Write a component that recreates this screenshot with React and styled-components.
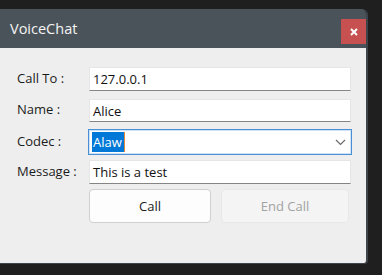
import React from 'react';
import styled, { createGlobalStyle } from 'styled-components';

const Global = createGlobalStyle`
  html, body {
    margin: 0;
    padding: 0;
    background: #1f1f1f;
    font-family: "Open Sans", "Noto Sans", sans-serif;
  }
`;

const Window = styled.div`
  margin-top: 9px;
  width: 366px;
  border-right: 2px solid #3d444a;
  border-bottom: 1px solid #3d444a;
  border-radius: 0 6px 4px 0;
  overflow: hidden;
`;

const TitleBar = styled.div`
  height: 39px;
  background: #4b535a;
  display: flex;
  align-items: center;
  justify-content: space-between;
  padding-left: 10px;
  box-sizing: border-box;
`;

const Title = styled.span`
  color: #f4f4f4;
  font-size: 14.5px;
  margin-top: -1px;
`;

const CloseButton = styled.div`
  width: 25px;
  height: 25px;
  background: #c75050;
  display: flex;
  align-items: center;
  justify-content: center;
  align-self: flex-start;
  margin-top: 10px;
`;

const Body = styled.div`
  height: 215px;
  background: #eeeeee;
  box-sizing: border-box;
  padding: 19px 0 0 17px;
`;

const Row = styled.div`
  display: flex;
  align-items: flex-start;
  margin-top: ${p => p.$gap || 0}px;
`;

const Label = styled.div`
  width: 72px;
  font-size: 13px;
  color: #1b1b1b;
  padding-top: ${p => p.$pt || 3}px;
`;

const TextBox = styled.div`
  width: 262px;
  height: ${p => p.$h}px;
  box-sizing: border-box;
  background: #fff;
  border: 1px solid #e6e6e6;
  border-bottom-color: #858585;
  font-size: 13px;
  color: #111;
  padding: 0 0 0 3px;
  display: flex;
  align-items: center;
`;

const Select = styled(TextBox)`
  width: 264px;
  margin-left: -1px;
  border: 1px solid #4a8fd6;
  box-shadow: inset 0 0 0 1px #cfe2f6;
  justify-content: space-between;
  padding: 0 5px 0 3px;
`;

const Selected = styled.span`
  background: #0078d7;
  color: #fff;
  padding: 1px 2px 1px 1px;
  border-right: 1px solid #e08a3a;
  line-height: 18px;
`;

const Buttons = styled.div`
  display: flex;
  gap: 10px;
  margin: 5px 0 0 72px;
`;

const Button = styled.div`
  width: ${p => p.$w}px;
  height: 34px;
  box-sizing: border-box;
  border-radius: 4px;
  display: flex;
  align-items: center;
  justify-content: center;
  font-size: 13px;
  background: ${p => (p.$disabled ? '#f4f4f4' : '#fdfdfd')};
  border: 1px solid ${p => (p.$disabled ? '#e8e8e8' : '#cfcfcf')};
  color: ${p => (p.$disabled ? '#a2a2a2' : '#1b1b1b')};
`;

export default function App() {
  return (
    <>
      <Global />
      <Window>
        <TitleBar>
          <Title>VoiceChat</Title>
          <CloseButton>
            <svg width="8" height="8" viewBox="0 0 8 8">
              <path d="M1 1 L7 7 M7 1 L1 7" stroke="#fff" strokeWidth="2" />
            </svg>
          </CloseButton>
        </TitleBar>
        <Body>
          <Row>
            <Label $pt={2}>Call To :</Label>
            <TextBox $h={24}>127.0.0.1</TextBox>
          </Row>
          <Row $gap={8}>
            <Label $pt={1}>Name :</Label>
            <TextBox $h={23}>Alice</TextBox>
          </Row>
          <Row $gap={7}>
            <Label $pt={3}>Codec :</Label>
            <Select $h={26}>
              <Selected>Alaw</Selected>
              <svg width="11" height="7" viewBox="0 0 11 7">
                <path d="M1 1 L5.5 5.5 L10 1" fill="none" stroke="#6a6a6a" strokeWidth="1.2" />
              </svg>
            </Select>
          </Row>
          <Row $gap={5}>
            <Label $pt={2}>Message :</Label>
            <TextBox $h={24}>This is a test</TextBox>
          </Row>
          <Buttons>
            <Button $w={122}>Call</Button>
            <Button $w={128} $disabled>End Call</Button>
          </Buttons>
        </Body>
      </Window>
    </>
  );
}
